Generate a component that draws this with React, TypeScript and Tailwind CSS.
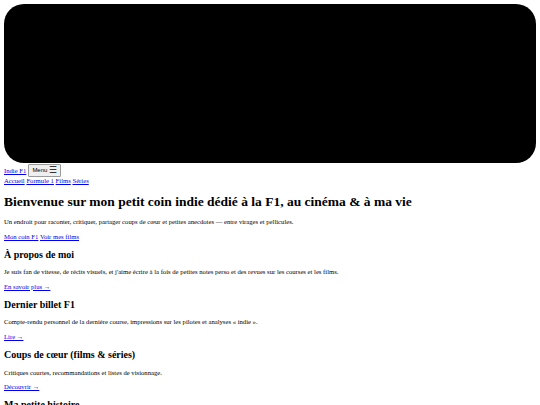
export default function App() {
  const sections = [
    { title: 'À propos de moi', text: "Je suis fan de vitesse, de récits visuels, et j'aime écrire à la fois de petites notes perso et des revues sur les courses et les films.", link: 'En savoir plus →' },
    { title: 'Dernier billet F1', text: 'Compte-rendu personnel de la dernière course, impressions sur les pilotes et analyses « indie ».', link: 'Lire →' },
    { title: 'Coups de cœur (films & séries)', text: 'Critiques courtes, recommandations et listes de visionnage.', link: 'Découvrir →' },
    { title: 'Ma petite histoire', text: '', link: '' },
  ]

  return (
    <div className="p-[4px] text-[6.67px] leading-[1.15] text-black bg-white" style={{ fontFamily: '"Liberation Serif", "Times New Roman", serif' }}>
      <div className="h-[159px] w-full rounded-[20px] bg-black" />

      <header>
        <div className="flex items-center gap-[2px] pt-[1px]">
          <a href="#" className="text-[#0000ee] underline">Indie F1</a>
          <button className="flex items-center gap-[2px] border border-[#9a9a9a] bg-[#efefef] px-[3px] py-[1px] text-[6px] rounded-[1px]" style={{ fontFamily: '"Liberation Sans", Arial, sans-serif' }}>
            Menu <span className="text-[9px] leading-none">☰</span>
          </button>
        </div>
        <nav>
          <a href="#" className="text-[#0000ee] underline">Accueil</a>{' '}
          <a href="#" className="text-[#0000ee] underline">Formule 1</a>{' '}
          <a href="#" className="text-[#0000ee] underline">Films</a>{' '}
          <a href="#" className="text-[#0000ee] underline">Séries</a>
        </nav>
      </header>

      <main>
        <h1 className="my-[0.67em] text-[13.5px] font-bold">Bienvenue sur mon petit coin indie dédié à la F1, au cinéma &amp; à ma vie</h1>
        <p className="my-[1em]">Un endroit pour raconter, critiquer, partager coups de cœur et petites anecdotes — entre virages et pellicules.</p>
        <p className="my-[1em]">
          <a href="#" className="text-[#0000ee] underline">Mon coin F1</a>{' '}
          <a href="#" className="text-[#0000ee] underline">Voir mes films</a>
        </p>

        {sections.map((s, i) => (
          <section key={i}>
            <h2 className="my-[0.83em] text-[10px] font-bold">{s.title}</h2>
            {s.text && <p className="my-[1em]">{s.text}</p>}
            {s.link && (
              <p className="my-[1em]">
                <a href="#" className="text-[#0000ee] underline">{s.link}</a>
              </p>
            )}
          </section>
        ))}
      </main>
    </div>
  )
}
